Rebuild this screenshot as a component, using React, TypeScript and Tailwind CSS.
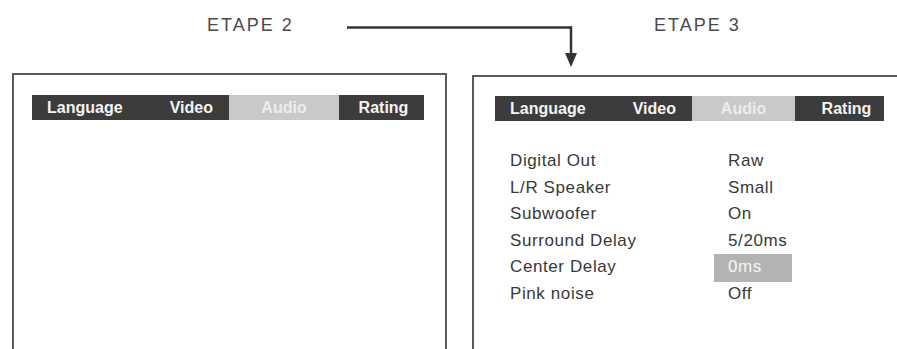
import React from "react";

const rows: { label: string; value: string; hl?: boolean }[] = [
  { label: "Digital Out", value: "Raw" },
  { label: "L/R Speaker", value: "Small" },
  { label: "Subwoofer", value: "On" },
  { label: "Surround Delay", value: "5/20ms" },
  { label: "Center Delay", value: "0ms", hl: true },
  { label: "Pink noise", value: "Off" },
];

function TabBar({ audioW, ratingW, ratingPl }: { audioW: string; ratingW: string; ratingPl: string }) {
  return (
    <div className="flex h-[25px] text-[16px] font-bold text-[#f4f4f4] leading-none">
      <div className="w-[197px] shrink-0 bg-[#3c3c3c] flex items-center justify-between pl-[15px] pr-[16px]">
        <span>Language</span>
        <span>Video</span>
      </div>
      <div className={`${audioW} shrink-0 bg-[#c9c9c9] flex items-center justify-center text-[#ededed]`}>
        <span>Audio</span>
      </div>
      <div className={`${ratingW} shrink-0 bg-[#3c3c3c] flex items-center justify-center ${ratingPl}`}>
        <span>Rating</span>
      </div>
    </div>
  );
}

export default function App() {
  return (
    <div
      className="w-[897px] h-[349px] overflow-hidden bg-white relative"
      style={{ fontFamily: '"Liberation Sans", Arial, sans-serif' }}
    >
      <div className="relative h-[73px] flex text-[18px] tracking-[2px] text-[#4a4a4a] leading-[18px]">
        <div className="w-[460px] shrink-0 pl-[207px] pt-[16px]">ETAPE 2</div>
        <div className="shrink-0 pl-[194px] pt-[16px]">ETAPE 3</div>
        <svg
          className="absolute left-[340px] top-[20px]"
          width="250"
          height="55"
          viewBox="0 0 250 55"
        >
          <line x1="7" y1="7.5" x2="232" y2="7.5" stroke="#333" strokeWidth="2.5" />
          <line x1="231" y1="6.5" x2="231" y2="36" stroke="#333" strokeWidth="2.5" />
          <polygon points="225,33 237,33 231,47" fill="#333" />
        </svg>
      </div>
      <div className="flex items-start">
        <div className="ml-[12px] w-[435px] shrink-0 h-[300px] border-2 border-[#5a5a5a] pt-[20px] pl-[18px]">
          <div className="w-[392px]">
            <TabBar audioW="w-[110px]" ratingW="w-[85px]" ratingPl="pl-[4px]" />
          </div>
        </div>
        <div className="ml-[25px] mt-[2px] w-[440px] shrink-0 h-[300px] border-2 border-[#5a5a5a] pt-[19px] pl-[21px]">
          <div className="w-[389px]">
            <TabBar audioW="w-[103px]" ratingW="w-[89px]" ratingPl="pl-[14px]" />
          </div>
          <div className="mt-[27px] pl-[15px] text-[17px] tracking-[0.6px] text-[#383838] leading-[26.6px]">
            {rows.map((r) => (
              <div key={r.label} className="flex h-[26.6px] items-center">
                <div className="w-[204px] shrink-0">{r.label}</div>
                {r.hl ? (
                  <div className="w-[78px] h-[28px] shrink-0 bg-[#b3b3b3] text-[#f6f6f6] pl-[14px] flex items-center">
                    {r.value}
                  </div>
                ) : (
                  <div className="pl-[14px]">{r.value}</div>
                )}
              </div>
            ))}
          </div>
        </div>
      </div>
    </div>
  );
}
